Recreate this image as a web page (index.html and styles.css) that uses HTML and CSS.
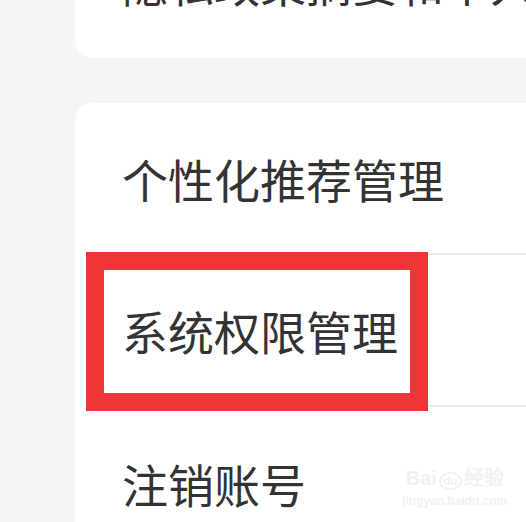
FILE: index.html
```html
<!DOCTYPE html>
<html lang="zh-CN">
<head>
    <meta charset="UTF-8">
    <meta name="viewport" content="width=device-width, initial-scale=1.0">
    <title>设置</title>
    <link rel="stylesheet" href="styles.css">
</head>
<body>
    <div class="page">
        <div class="card card-top">
            <div class="row">
                <div class="row-inner">隐私政策摘要和个人信息收集清单</div>
            </div>
        </div>
        <div class="card">
            <div class="row">
                <div class="row-inner line">个性化推荐管理</div>
            </div>
            <div class="row">
                <div class="row-inner line">系统权限管理</div>
                <div class="highlight"></div>
            </div>
            <div class="row">
                <div class="row-inner">注销账号</div>
            </div>
        </div>
    </div>
    <div class="watermark">
        <div class="wm-logo">Bai<span class="wm-du">du</span>经验</div>
        <div class="wm-url">jingyan.baidu.com</div>
    </div>
</body>
</html>
```

FILE: styles.css
```css
body {
    margin: 0;
    background-color: #f5f5f5;
    font-family: "Noto Sans CJK SC", "Noto Sans", sans-serif;
    color: #333;
    height: 522px;
    overflow: hidden;
    position: relative;
}
.page {
    padding-left: 75px;
}
.card {
    background-color: #fff;
    border-radius: 18px;
    margin-right: -40px;
    margin-bottom: 45px;
}
.card-top {
    margin-top: -94px;
}
.row {
    position: relative;
    padding-left: 47px;
}
.row-inner {
    height: 152px;
    display: flex;
    align-items: center;
    font-size: 46px;
    white-space: nowrap;
    overflow: hidden;
}
.row-inner.line {
    height: 150px;
    border-bottom: 2px solid #ececec;
}
.highlight {
    position: absolute;
    left: 11px;
    top: -3px;
    width: 306px;
    height: 123px;
    border: 18px solid #ee3537;
}
.watermark {
    position: absolute;
    left: 402px;
    top: 466px;
    color: #f1f1f1;
    text-align: center;
}
.wm-logo {
    font-family: "Liberation Sans", sans-serif;
    font-size: 20px;
    font-weight: bold;
    line-height: 24px;
}
.wm-du {
    display: inline-block;
    font-size: 12px;
    border: 2px solid #f1f1f1;
    border-radius: 50%;
    padding: 0 2px;
    line-height: 14px;
    margin: 0 2px;
}
.wm-url {
    font-family: "Liberation Sans", sans-serif;
    font-size: 12px;
    font-weight: bold;
    margin-top: 4px;
}
```
